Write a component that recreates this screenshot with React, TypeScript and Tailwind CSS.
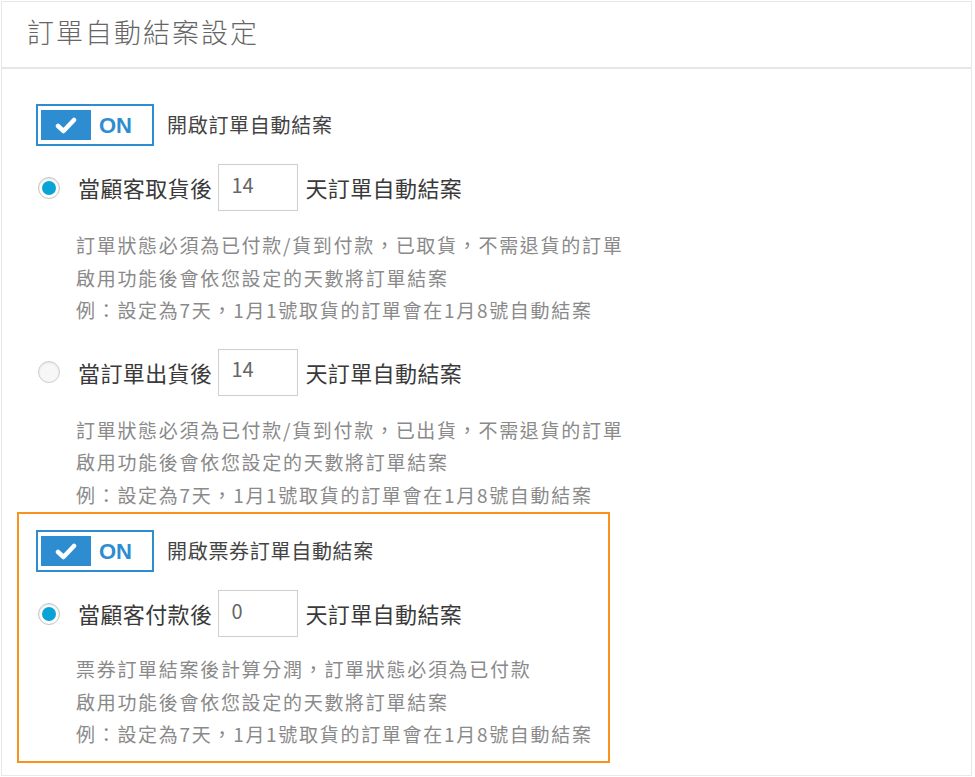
import React from 'react';

const cjk = { fontFamily: '"Noto Sans CJK TC", "Noto Sans", sans-serif' };

const Toggle: React.FC<{ label: string }> = ({ label }) => (
  <div className="flex items-center">
    <div className="w-[118px] h-[42px] border-2 border-[#2d8dd0] bg-white px-[3px] flex items-center">
      <div className="w-[50px] h-[30px] bg-[#2d8dd0] flex items-center justify-center">
        <svg width="22" height="17" viewBox="0 0 22 17">
          <polyline points="3,9 8.5,14 19,3" fill="none" stroke="#fff" strokeWidth="4.5" strokeLinecap="round" strokeLinejoin="round" />
        </svg>
      </div>
      <span className="ml-[8px] text-[22px] font-bold text-[#2d8dd0]" style={{ fontFamily: '"Liberation Sans", Arial, sans-serif' }}>
        ON
      </span>
    </div>
    <span className="ml-[13px] text-[20px] tracking-[0.7px] text-[#444]">{label}</span>
  </div>
);

const RadioRow: React.FC<{ checked: boolean; label: string; value: string }> = ({ checked, label, value }) => (
  <div className="flex items-center">
    <div
      className={
        checked
          ? 'ml-[2px] w-[22px] h-[22px] rounded-full border border-[#c4c4c4] bg-white flex items-center justify-center shadow-[inset_0_1px_2px_rgba(0,0,0,0.12)]'
          : 'ml-[2px] w-[22px] h-[22px] rounded-full border border-[#cdcdcd] bg-[#f7f7f7] shadow-[inset_0_1px_2px_rgba(0,0,0,0.08)]'
      }
    >
      {checked && <div className="w-[14px] h-[14px] rounded-full bg-[#0aa3d6]" />}
    </div>
    <span className="ml-[18px] text-[22px] tracking-[0.4px] text-[#3a3a3a]">{label}</span>
    <div className="ml-[6px] w-[80px] h-[47px] border border-[#cfcfcf] bg-white flex items-center pl-[12px] pb-[6px] text-[20px] text-[#666]">
      {value}
    </div>
    <span className="ml-[7px] text-[22px] tracking-[0.4px] text-[#3a3a3a]">天訂單自動結案</span>
  </div>
);

const Desc: React.FC<{ lines: string[] }> = ({ lines }) => (
  <div className="ml-[40px] text-[19px] tracking-[1.7px] leading-[32.5px] text-[#8a8a8a]">
    {lines.map((l) => (
      <div key={l}>{l}</div>
    ))}
  </div>
);

export default function App() {
  return (
    <div className="w-[975px] h-[777px] bg-white pt-px pl-px" style={cjk}>
      <div className="w-[971px] h-[775px] border border-[#e8e8e8]">
        <div className="h-[67px] border-b-2 border-[#e6e6e6] flex items-center pl-[25px] pb-[4px]">
          <h1 className="text-[27px] font-light tracking-[2px] text-[#666]">訂單自動結案設定</h1>
        </div>

        <div className="pl-[34px] pt-[35px]">
          <Toggle label="開啟訂單自動結案" />

          <div className="mt-[18px]">
            <RadioRow checked label="當顧客取貨後" value="14" />
          </div>
          <div className="mt-[18px]">
            <Desc
              lines={[
                '訂單狀態必須為已付款/貨到付款，已取貨，不需退貨的訂單',
                '啟用功能後會依您設定的天數將訂單結案',
                '例：設定為7天，1月1號取貨的訂單會在1月8號自動結案',
              ]}
            />
          </div>

          <div className="mt-[22px]">
            <RadioRow checked={false} label="當訂單出貨後" value="14" />
          </div>
          <div className="mt-[18px]">
            <Desc
              lines={[
                '訂單狀態必須為已付款/貨到付款，已出貨，不需退貨的訂單',
                '啟用功能後會依您設定的天數將訂單結案',
                '例：設定為7天，1月1號取貨的訂單會在1月8號自動結案',
              ]}
            />
          </div>

          <div className="ml-[-19px] mt-[1px] w-[593px] border-2 border-[#f7931e] pl-[17px] pt-[16px] pb-[10px]">
            <Toggle label="開啟票券訂單自動結案" />
            <div className="mt-[18px]">
              <RadioRow checked label="當顧客付款後" value="0" />
            </div>
            <div className="mt-[16px]">
              <Desc
                lines={[
                  '票券訂單結案後計算分潤，訂單狀態必須為已付款',
                  '啟用功能後會依您設定的天數將訂單結案',
                  '例：設定為7天，1月1號取貨的訂單會在1月8號自動結案',
                ]}
              />
            </div>
          </div>
        </div>
      </div>
    </div>
  );
}
